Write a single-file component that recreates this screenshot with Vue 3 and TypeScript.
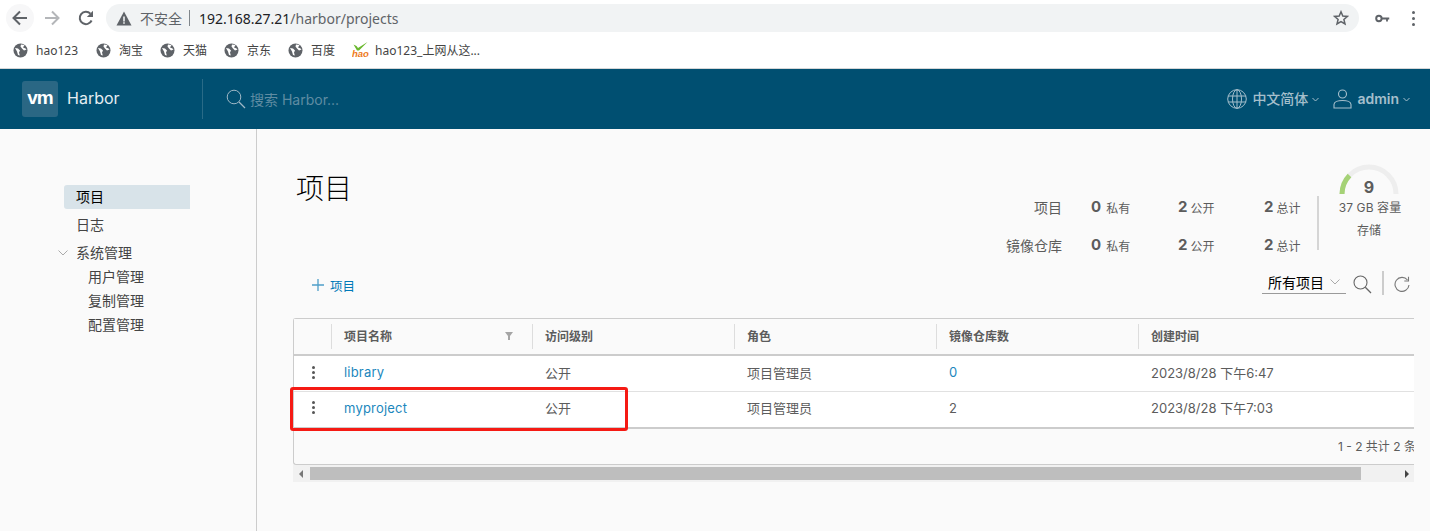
<template>
  <div class="page">
    <div class="toolbar">
      <div class="navBtns">
        <span class="roundBtn">
          <svg width="18" height="18" viewBox="0 0 18 18"><path d="M16 9H3M9 2.500 2.500 9 9 15.500" fill="none" stroke="#5f6368" stroke-width="2"/></svg>
        </span>
        <svg class="forward" width="18" height="18" viewBox="0 0 18 18"><path d="M2 9h13M9 2.500 15.500 9 9 15.500" fill="none" stroke="#b4b6b9" stroke-width="2"/></svg>
        <svg class="reload" width="18" height="18" viewBox="0 0 18 18"><path d="M14.600 11.500A6.200 6.200 0 1 1 13.400 4.600" fill="none" stroke="#5f6368" stroke-width="2"/><path d="M16 1.800V8h-6.200z" fill="#5f6368"/></svg>
      </div>
      <div class="omnibox">
        <svg width="16" height="15" viewBox="0 0 16 15"><path d="M8 .5 15.500 14.500H.5z" fill="#5f6368"/><path d="M7.200 5.500h1.600v5H7.200zM7.200 11.300h1.600v1.500H7.200z" fill="#f1f3f4"/></svg>
        <span class="insecure">不安全</span>
        <span class="omniSep"></span>
        <span class="url"><b>192.168.27.21</b>/harbor/projects</span>
        <svg class="star" width="16" height="16" viewBox="0 0 16 16"><path d="M8 1.800 9.800 6l4.600.4-3.500 3 1.100 4.500L8 11.500l-4 2.400 1.100-4.500-3.500-3L6.200 6z" fill="none" stroke="#5f6368" stroke-width="1.500"/></svg>
      </div>
      <svg class="key" width="15" height="9" viewBox="0 0 16 10"><circle cx="4" cy="5" r="3" fill="none" stroke="#5f6368" stroke-width="2.200"/><path d="M7 3.800h8.500v2.400h-1.500v2.200h-2V6.200H7z" fill="#5f6368"/></svg>
      <div class="dots"><i></i><i></i><i></i></div>
    </div>

    <div class="bookmarks">
      <div v-for="b in bookmarks" :key="b" class="bookmark">
        <svg width="15" height="15" viewBox="0 0 15 15"><circle cx="7.500" cy="7.500" r="7" fill="#5f6368"/><path d="M2 5l3 .5 2 2-1 2 .8 3L5 12 4 8.500zM8 1.500l3.500.5L10 4.500l2.500 1 1 1-2.500 1-2-2L7.500 3.500z" fill="#fff"/></svg>
        <span>{{ b }}</span>
      </div>
      <div class="bookmark haoMark">
        <svg width="17" height="16" viewBox="0 0 17 16"><path d="M1.500 2.500l3 1.500 1.500 2L15.500 0 7 8.500H5z" fill="#6ab82e"/><text x="0" y="15" font-size="9.500" font-weight="700" font-style="italic" fill="#ee7a1a" font-family="Liberation Sans">hao</text></svg>
        <span>hao123_上网从这...</span>
      </div>
    </div>

    <header class="appHeader">
      <div class="brand">
        <span class="logo">vm</span>
        <span class="brandName">Harbor</span>
      </div>
      <div class="search">
        <svg width="20" height="20" viewBox="0 0 20 20"><circle cx="8" cy="8" r="6.800" fill="none" stroke="#9fb8c6" stroke-width="1"/><path d="M13 13l6 6" stroke="#9fb8c6" stroke-width="1.200"/></svg>
        <span>搜索 Harbor...</span>
      </div>
      <div class="headerRight">
        <svg width="20" height="20" viewBox="0 0 20 20" fill="none" stroke="#a5bfcc" stroke-width="1"><circle cx="10" cy="10" r="9.300"/><ellipse cx="10" cy="10" rx="4.500" ry="9.300"/><path d="M10 .7v18.600M1 7h18M1 13h18"/></svg>
        <span class="lang">中文简体</span>
        <svg class="caret" width="7" height="5" viewBox="0 0 7 5"><path d="M.5 1 3.500 4l3-3" fill="none" stroke="#a5bfcc"/></svg>
        <svg class="userIcon" width="19" height="20" viewBox="0 0 19 20" fill="none" stroke="#a5bfcc" stroke-width="1.100"><circle cx="9.500" cy="5" r="4"/><path d="M1 19v-3.500C1 13 5 11.500 9.500 11.500S18 13 18 15.500V19z"/></svg>
        <span class="user">admin</span>
        <svg class="caret" width="7" height="5" viewBox="0 0 7 5"><path d="M.5 1 3.500 4l3-3" fill="none" stroke="#a5bfcc"/></svg>
      </div>
    </header>

    <div class="body">
      <nav class="sidenav">
        <a class="navItem active">项目</a>
        <a class="navItem">日志</a>
        <a class="navItem group">
          <svg width="10" height="6" viewBox="0 0 10 6"><path d="M.5.5 5 5 9.500.5" fill="none" stroke="#aaa"/></svg>
          系统管理
        </a>
        <a v-for="s in adminLinks" :key="s" class="subItem">{{ s }}</a>
      </nav>

      <main class="content">
        <div class="top">
          <h1>项目</h1>
          <div class="summary">
            <div class="counts">
              <template v-for="row in summaryRows" :key="row">
                <span class="rowLabel">{{ row }}</span>
                <span class="stat s1"><b>0</b>私有</span>
                <span class="stat s2"><b>2</b>公开</span>
                <span class="stat s3"><b>2</b>总计</span>
              </template>
            </div>
            <div class="storage">
              <svg class="gauge" width="60" height="30" viewBox="0 0 60 30">
                <path d="M3 30A27 27 0 0 1 57 30" fill="none" stroke="#eeeeee" stroke-width="5"/>
                <path d="M3 30A27 27 0 0 1 10.500 11.500" fill="none" stroke="#a5d276" stroke-width="5"/>
              </svg>
              <span class="gaugeNum">9</span>
              <div class="capacity">37 GB 容量</div>
              <div class="storeLabel">存储</div>
            </div>
          </div>
        </div>

        <div class="actions">
          <a class="addBtn">
            <svg width="12" height="12" viewBox="0 0 12 12"><path d="M6 0v12M0 6h12" stroke="#4f9fc9" stroke-width="1.300"/></svg>
            项目
          </a>
          <div class="filters">
            <div class="select">
              <span>所有项目</span>
              <svg width="10" height="6" viewBox="0 0 10 6"><path d="M.5.5 5 5 9.500.5" fill="none" stroke="#aaa"/></svg>
            </div>
            <svg class="searchIcon" width="19" height="19" viewBox="0 0 19 19"><circle cx="7.500" cy="7.500" r="6.500" fill="none" stroke="#666" stroke-width="1.100"/><path d="M12.300 12.300 18 18" stroke="#666" stroke-width="1.300"/></svg>
            <span class="vsep"></span>
            <svg class="refresh" width="16" height="16" viewBox="0 0 16 16" fill="none"><path d="M13.500 4A7 7 0 1 0 15 9" stroke="#777" stroke-width="1.100"/><path d="M14.500 .8V5h-4.200" stroke="#777" stroke-width="1.100"/></svg>
          </div>
        </div>

        <div class="gridWrap">
          <div class="grid">
            <div class="gridRow head">
              <div class="cell c0"></div>
              <div class="cell c1">项目名称
                <svg class="filter" width="8" height="8" viewBox="0 0 8 8"><path d="M0 0h8L5 4v4H3V4z" fill="#a5a5a5"/></svg>
              </div>
              <div class="cell c2">访问级别</div>
              <div class="cell c3">角色</div>
              <div class="cell c4">镜像仓库数</div>
              <div class="cell c5">创建时间</div>
            </div>
            <div v-for="(r, i) in projects" :key="r.name" class="gridRow" :class="{ last: i === projects.length - 1 }">
              <div class="cell c0"><span class="kebab"><i></i><i></i><i></i></span></div>
              <div class="cell c1 link">{{ r.name }}</div>
              <div class="cell c2">公开</div>
              <div class="cell c3">项目管理员</div>
              <div class="cell c4" :class="{ link: r.count === 0 }">{{ r.count }}</div>
              <div class="cell c5">{{ r.created }}</div>
            </div>
            <div class="gridFoot">1 - 2 共计 2 条</div>
            <div class="mark"></div>
          </div>
          <div class="scrollbar">
            <span class="arrow left"></span>
            <span class="thumb"></span>
            <span class="arrow right"></span>
          </div>
        </div>
      </main>
    </div>
  </div>
</template>

<script setup lang="ts">
const bookmarks = ['hao123', '淘宝', '天猫', '京东', '百度']
const adminLinks = ['用户管理', '复制管理', '配置管理']
const summaryRows = ['项目', '镜像仓库']
const projects = [
  { name: 'library', count: 0, created: '2023/8/28 下午6:47' },
  { name: 'myproject', count: 2, created: '2023/8/28 下午7:03' },
]
</script>

<style>
html, body {
  margin: 0;
  overflow: hidden;
  background: #fafafa;
}
</style>

<style scoped>
.page {
  width: 1430px;
  height: 531px;
  overflow: hidden;
  display: flex;
  flex-direction: column;
  font-family: Inter, "Noto Sans CJK SC", sans-serif;
  font-size: 13px;
  color: #5c5c5c;
}
.toolbar {
  height: 36px;
  flex: none;
  background: #fff;
  display: flex;
  align-items: center;
  padding: 0 10px 0 6px;
  box-sizing: border-box;
}
.navBtns {
  display: flex;
  align-items: center;
  width: 100px;
  flex: none;
}
.roundBtn {
  width: 28px;
  height: 28px;
  border-radius: 50%;
  background: #f7f7f8;
  display: flex;
  align-items: center;
  justify-content: center;
}
.forward { margin-left: 9px; }
.reload { margin-left: 16px; }
.omnibox {
  width: 1253px;
  height: 28px;
  border-radius: 14px;
  background: #f1f3f4;
  display: flex;
  align-items: center;
  padding: 0 10px;
  box-sizing: border-box;
  color: #5f6368;
  font-family: "Noto Sans", "Noto Sans CJK SC", sans-serif;
  flex: none;
}
.insecure { margin-left: 8px; font-size: 14px; }
.omniSep {
  width: 1px;
  height: 16px;
  background: #80868b;
  margin: 0 9px 0 7px;
}
.url { font-size: 14px; flex: 1; }
.url b { font-weight: 400; color: #202124; }
.key { margin-left: 16px; }
.dots { margin-left: 22px; display: flex; flex-direction: column; gap: 3px; }
.dots i { width: 3px; height: 3px; border-radius: 50%; background: #5f6368; display: block; }

.bookmarks {
  height: 33px;
  flex: none;
  background: #fff;
  display: flex;
  align-items: center;
  padding: 0 0 4px 13px;
  box-sizing: border-box;
  gap: 17px;
  font-size: 12px;
  color: #444;
  font-family: "Noto Sans", "Noto Sans CJK SC", sans-serif;
  border-bottom: 1px solid #d5d6d7;
}
.bookmark { display: flex; align-items: center; gap: 8px; }
.bookmark:first-child { margin-right: 1px; }
.haoMark { gap: 6px; }

.appHeader {
  height: 60px;
  flex: none;
  background: #004f71;
  display: flex;
  align-items: center;
  box-sizing: border-box;
  padding: 0 20px 0 22px;
}
.brand {
  width: 180px;
  height: 40px;
  display: flex;
  align-items: center;
  gap: 9px;
  border-right: 1px solid #296b87;
}
.logo {
  width: 36px;
  height: 36px;
  border-radius: 3px;
  background: #2a6784;
  color: #fff;
  font: 700 19px/34px "Liberation Sans", sans-serif;
  text-align: center;
  letter-spacing: -1px;
}
.brandName { color: #e4edf1; font-size: 16px; margin-bottom: 2px; }
.search {
  display: flex;
  align-items: center;
  margin-left: 23px;
  gap: 4px;
  color: #5f8ca2;
  font-size: 14px;
  flex: 1;
}
.headerRight {
  display: flex;
  align-items: center;
  color: #a5bfcc;
  font-size: 14px;
  font-weight: 500;
}
.lang { margin: 0 0 2px 5px; }
.caret { margin-left: 4px; }
.userIcon { margin-left: 14px; }
.user { margin: 0 0 2px 5px; font-weight: 600; }

.body {
  flex: 1;
  display: flex;
  background: #fafafa;
  min-height: 0;
}
.sidenav {
  width: 257px;
  flex: none;
  box-sizing: border-box;
  border-right: 1px solid #ccc;
  padding: 56px 66px 0 64px;
  display: flex;
  flex-direction: column;
  color: #444;
  font-size: 14px;
}
.navItem {
  height: 24px;
  line-height: 24px;
  padding-left: 12px;
  margin-bottom: 4px;
  position: relative;
}
.navItem.active {
  background: #d8e3e9;
  border-radius: 3px 0 0 3px;
  color: #000;
}
.navItem svg {
  position: absolute;
  left: -6px;
  top: 9px;
}
.subItem {
  height: 24px;
  line-height: 24px;
  padding-left: 24px;
}
.navItem.group { margin-bottom: 0; }
.content {
  flex: 1;
  min-width: 0;
  padding: 0 16px 0 36px;
  display: flex;
  flex-direction: column;
}
.top {
  display: flex;
  justify-content: space-between;
  height: 130px;
}
h1 {
  margin: 41px 0 0 3px;
  font-size: 28px;
  line-height: 38px;
  font-weight: 300;
  color: #000;
}
.summary {
  display: flex;
  margin-top: 35px;
  margin-right: 11px;
}
.counts {
  display: grid;
  grid-template-columns: 56px 87px 86px 58px;
  grid-template-rows: 22px 22px;
  row-gap: 16px;
  align-items: center;
  align-content: start;
  margin-top: 32px;
  height: 54px;
  padding-right: 17px;
  border-right: 2px solid #d5d5d5;
  font-size: 12px;
}
.rowLabel { font-size: 14px; justify-self: end; white-space: nowrap; margin-right: 7px; }
.stat { padding-left: 22px; white-space: nowrap; }
.stat b { font-size: 15px; font-weight: 700; margin-right: 3px; position: relative; top: -1px; }
.s1 b { margin-right: 5px; }
.storage {
  position: relative;
  width: 84px;
  text-align: center;
  font-size: 12px;
  flex: none;
}
.gauge { display: block; margin: 0 0 0 20px; }
.gaugeNum {
  position: absolute;
  left: 0;
  width: 100px;
  top: 13px;
  font-size: 16px;
  font-weight: 700;
}
.capacity { white-space: nowrap; width: 102px; line-height: 16px; margin-top: 6px; letter-spacing: .1px; }
.storeLabel { width: 100px; margin-top: 7px; line-height: 16px; }

.actions {
  display: flex;
  justify-content: space-between;
  align-items: center;
  height: 30px;
  margin-top: 11px;
}
.addBtn {
  display: flex;
  align-items: center;
  gap: 6px;
  margin-left: 19px;
  color: #0079b8;
  font-size: 12.500px;
}
.filters { display: flex; align-items: center; padding-right: 4px; }
.select {
  width: 84px;
  height: 24px;
  box-sizing: border-box;
  border-bottom: 1px solid #9a9a9a;
  display: flex;
  align-items: center;
  justify-content: space-between;
  padding: 0 6px;
  color: #000;
  font-size: 14px;
  margin-bottom: 6px;
}
.searchIcon { margin: 0 0 2px 7px; }
.vsep { width: 2px; height: 24px; background: #ccc; margin: 0 10px 4px; }
.refresh { margin-bottom: 2px; }

.gridWrap { margin-top: 18px; }
.grid {
  border: 1px solid #ccc;
  border-right: 0;
  border-radius: 3px 0 0 3px;
  position: relative;
  height: 147px;
  box-sizing: border-box;
}
.gridRow {
  display: flex;
  height: 36px;
  background: #fff;
  border-bottom: 1px solid #e1e1e1;
  box-sizing: border-box;
}
.gridRow.last { border-bottom: 2px solid #ccc; height: 37px; }
.gridRow.head {
  background: #fafafa;
  height: 37px;
  border-bottom: 2px solid #ccc;
  font-weight: 600;
}
.cell {
  box-sizing: border-box;
  display: flex;
  align-items: center;
  padding: 0 0 3px 13px;
  position: relative;
  font-size: 13px;
}
.last .cell { padding-bottom: 4px; }
.head .cell { font-size: 12px; padding-bottom: 2px; }
.head .cell:not(:first-child)::before {
  content: '';
  position: absolute;
  left: 0;
  top: 5px;
  bottom: 5px;
  width: 1px;
  background: #ddd;
}
.cell.c0 { width: 37px; padding-left: 2px; justify-content: center; }
.c1 { width: 201px; }
.c2 { width: 202px; }
.c3 { width: 202px; }
.c4 { width: 202px; }
.c5 { flex: 1; }
.link { color: #1b87bd; letter-spacing: .2px; }
.filter { position: absolute; right: 19px; top: 13px; }
.kebab { display: flex; flex-direction: column; gap: 2px; }
.kebab i { width: 3px; height: 3px; background: #565656; border-radius: 50%; display: block; }
.gridFoot {
  height: 35px;
  line-height: 35px;
  padding-left: 1044px;
  overflow: hidden;
  font-size: 12px;
  white-space: nowrap;
}
.mark {
  position: absolute;
  left: -4px;
  top: 68px;
  width: 338px;
  height: 44px;
  border: 3px solid #f51a14;
  border-radius: 3px;
  box-sizing: border-box;
  pointer-events: none;
}
.scrollbar {
  height: 17px;
  background: #f1f1f1;
  display: flex;
  align-items: center;
}
.arrow { width: 0; height: 0; border-style: solid; flex: none; }
.arrow.left { border-width: 4px 4px 4px 0; border-color: transparent #777 transparent transparent; margin-left: 6px; }
.arrow.right { border-width: 4px 0 4px 4px; border-color: transparent transparent transparent #444; margin-left: 44px; }
.thumb { height: 13px; background: #bebebe; width: 1051px; margin-left: 7px; flex: none; }
</style>
